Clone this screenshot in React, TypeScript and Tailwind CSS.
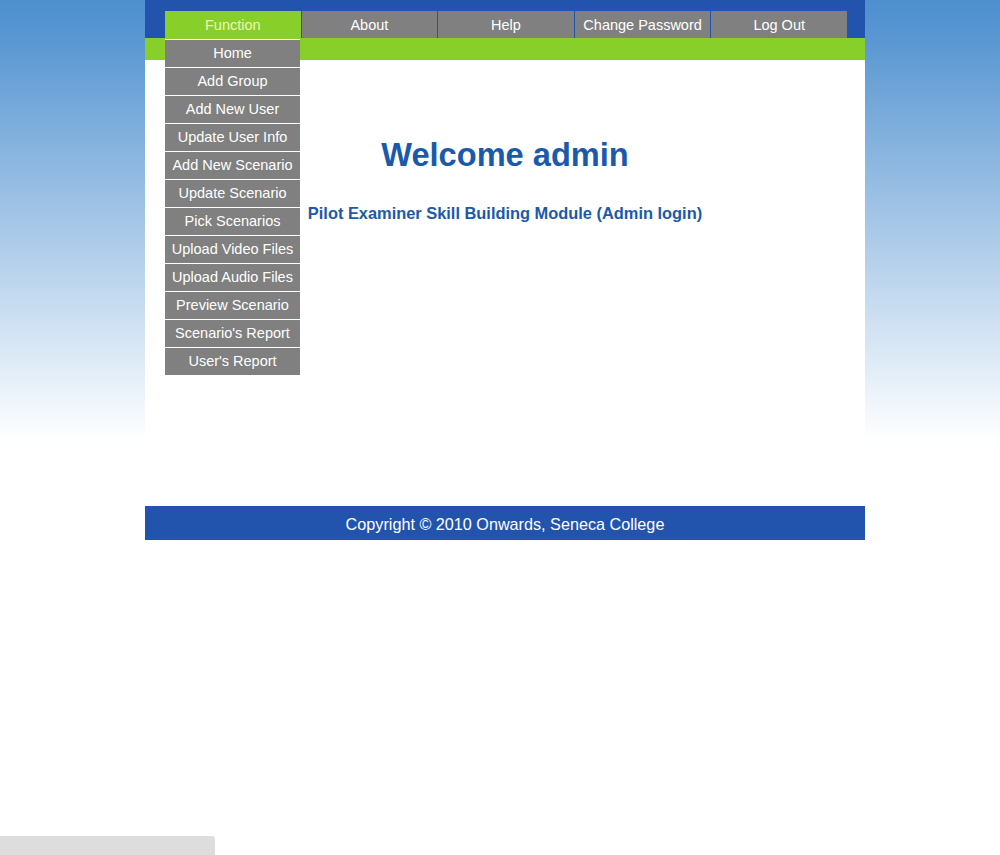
const topMenu = ["Function", "About", "Help", "Change Password", "Log Out"];

const functionItems = [
  "Home",
  "Add Group",
  "Add New User",
  "Update User Info",
  "Add New Scenario",
  "Update Scenario",
  "Pick Scenarios",
  "Upload Video Files",
  "Upload Audio Files",
  "Preview Scenario",
  "Scenario's Report",
  "User's Report",
];

export default function App() {
  return (
    <div
      className="min-h-screen w-full bg-[linear-gradient(to_bottom,#4e8fcf_0px,#5a97d2_40px,#ffffff_440px)]"
      style={{ fontFamily: '"Liberation Sans", Arial, sans-serif' }}
    >
      <div className="ml-[145px] w-[720px]">
        {/* header */}
        <div className="relative bg-[#2254ad] px-5 pt-[11px]">
          <ul className="grid w-[682px] grid-cols-5 gap-px">
            {topMenu.map((label, i) => (
              <li
                key={label}
                className={
                  i === 0
                    ? "flex h-[27px] items-center justify-center bg-[#88cf2a] pt-[2px] text-[14.5px] text-[#eef6b6]"
                    : "flex h-[27px] items-center justify-center bg-[#808080] pt-[2px] text-[14.5px] text-white"
                }
              >
                {label}
              </li>
            ))}
          </ul>

          {/* open dropdown */}
          <ul className="absolute left-5 top-[39px] z-10 w-[135px]">
            {functionItems.map((item) => (
              <li
                key={item}
                className="flex h-[28px] items-center justify-center border-t border-white bg-[#808080] pt-[1px] text-[14.5px] text-white"
              >
                {item}
              </li>
            ))}
          </ul>
        </div>

        <div className="h-[22px] bg-[#88cf2a]" />

        {/* main */}
        <div className="h-[446px] bg-white pt-[76px] text-center text-[#1a59ab]">
          <h1 className="text-[32.6px] font-bold leading-[38px]">Welcome admin</h1>
          <p className="mt-[27px] text-[16.4px] font-bold">
            Pilot Examiner Skill Building Module (Admin login)
          </p>
        </div>

        {/* footer */}
        <div className="flex h-[34px] items-center justify-center bg-[#2254ad] pt-[3px] text-[16.2px] text-white">
          Copyright © 2010 Onwards, Seneca College
        </div>
      </div>

      <div className="fixed bottom-0 left-0 h-[19px] w-[215px] rounded-tr-[3px] bg-[#dddddd]" />
    </div>
  );
}
